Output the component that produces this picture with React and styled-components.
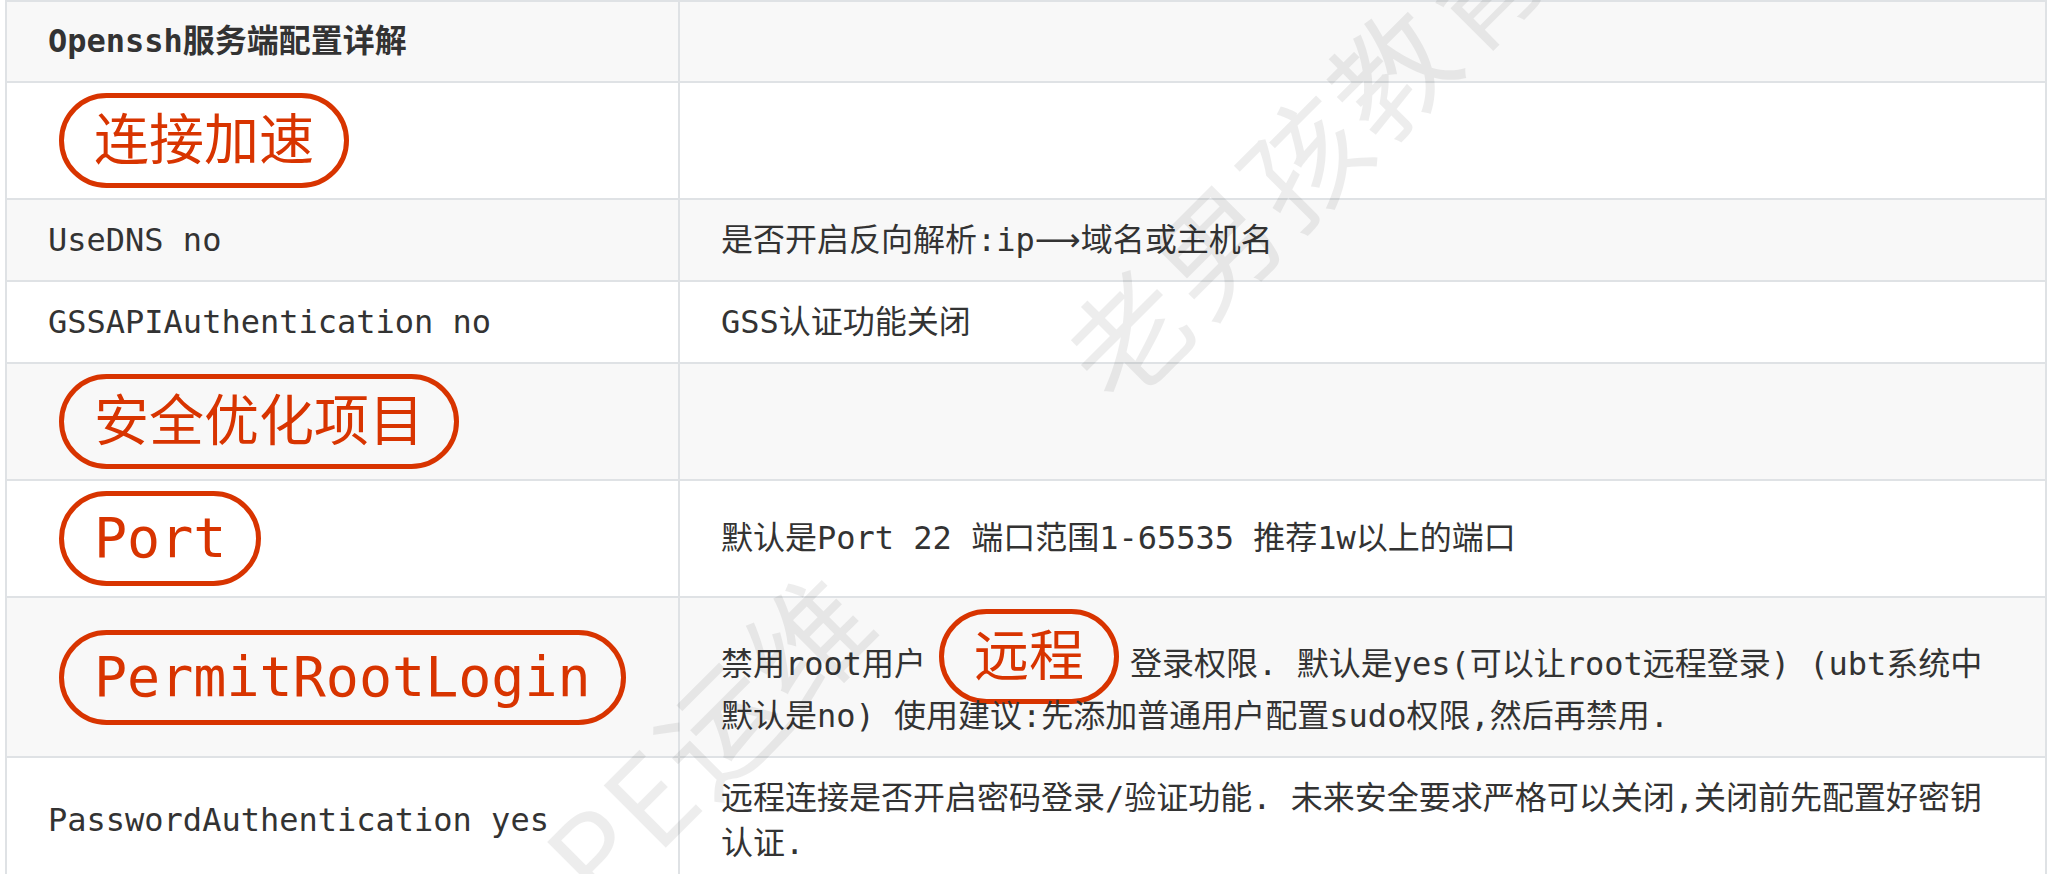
import React from "react";
import styled, { createGlobalStyle } from "styled-components";

const GlobalStyle = createGlobalStyle`
  html, body {
    margin: 0;
    padding: 0;
    background: #fff;
  }
  body {
    font-family: "DejaVu Sans Mono", "Noto Sans CJK SC", "DejaVu Sans", monospace;
    color: #333;
  }
`;

const Page = styled.div`
  position: relative;
  min-height: 100vh;
  overflow: hidden;
  padding: 0 0 0 5px;
`;

const Table = styled.table`
  width: 2040px;
  border-collapse: collapse;
  table-layout: fixed;
  font-size: 32px;
  line-height: 45px;
`;

const Col = styled.col`
  width: ${(p) => p.$w}px;
`;

const Row = styled.tr`
  background: ${(p) => (p.$shade ? "#f8f8f8" : "#fff")};
`;

const HeadCell = styled.th`
  border: 2px solid #dfe2e5;
  padding: 16.5px 40px 17.5px 41px;
  text-align: left;
  font-weight: 700;
  vertical-align: middle;
`;

const Cell = styled.td`
  border: 2px solid #dfe2e5;
  padding: ${(p) => (p.$badge ? "10px 40px 10px 41px" : "17.5px 40px 17.5px 41px")};
  vertical-align: middle;
  text-align: left;
  white-space: nowrap;
`;

const Arrow = styled.span`
  font-family: "DejaVu Sans", sans-serif;
`;

const Mark = styled.span`
  display: ${(p) => (p.$inline ? "inline-block" : "block")};
  width: fit-content;
  margin: ${(p) => (p.$inline ? "-7px 11px -10px 13px" : "0 0 0 11px")};
  padding: 15px 30px;
  border: 5px solid #d83400;
  border-radius: 48px;
  color: #d83400;
  font-size: 55px;
  line-height: 55px;
  font-weight: 400;
`;

const Watermark = styled.div`
  position: absolute;
  left: ${(p) => p.$x}px;
  top: ${(p) => p.$y}px;
  transform-origin: left center;
  transform: translateY(-50%) rotate(-45deg);
  font-family: "Noto Sans CJK SC", sans-serif;
  font-size: 120px;
  line-height: 120px;
  letter-spacing: 4px;
  color: rgba(0, 0, 0, 0.07);
  white-space: nowrap;
  pointer-events: none;
`;

const rows = [
  { id: "speed", badge: true, left: <Mark>连接加速</Mark>, right: null },
  {
    id: "dns",
    left: "UseDNS no",
    right: (
      <>
        是否开启反向解析:ip<Arrow>⟶</Arrow>域名或主机名
      </>
    ),
  },
  { id: "gss", left: "GSSAPIAuthentication no", right: "GSS认证功能关闭" },
  { id: "safe", badge: true, left: <Mark>安全优化项目</Mark>, right: null },
  {
    id: "port",
    badge: true,
    left: <Mark>Port</Mark>,
    right: "默认是Port 22 端口范围1-65535 推荐1w以上的端口",
  },
  {
    id: "root",
    badge: true,
    left: <Mark>PermitRootLogin</Mark>,
    right: (
      <>
        禁用root用户<Mark $inline>远程</Mark>登录权限. 默认是yes(可以让root远程登录) (ubt系统中
        <br />
        默认是no) 使用建议:先添加普通用户配置sudo权限,然后再禁用.
      </>
    ),
  },
  {
    id: "pwd",
    left: "PasswordAuthentication yes",
    right: (
      <>
        远程连接是否开启密码登录/验证功能. 未来安全要求严格可以关闭,关闭前先配置好密钥
        <br />
        认证.
      </>
    ),
  },
];

const App = () => {
  return (
    <Page>
      <GlobalStyle />
      <Table>
        <colgroup>
          <Col $w={673} />
          <Col $w={1367} />
        </colgroup>
        <thead>
          <Row $shade>
            <HeadCell>Openssh服务端配置详解</HeadCell>
            <HeadCell />
          </Row>
        </thead>
        <tbody>
          {rows.map((row, i) => (
            <Row key={row.id} $shade={i % 2 === 1}>
              <Cell $badge={row.badge}>{row.left}</Cell>
              <Cell>{row.right}</Cell>
            </Row>
          ))}
        </tbody>
      </Table>
      <Watermark $x={1082} $y={375}>老男孩教育</Watermark>
      <Watermark $x={564} $y={876}>PE运维</Watermark>
    </Page>
  );
};

export default App;
